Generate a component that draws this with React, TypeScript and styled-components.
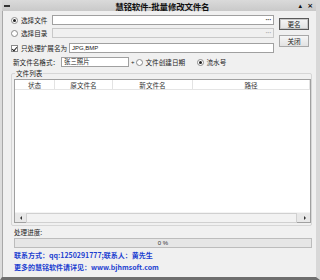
import React from 'react';
import styled, { createGlobalStyle } from 'styled-components';

const GlobalStyle = createGlobalStyle`
  html, body {
    margin: 0;
    padding: 0;
    background: #f0f0f0;
  }
  * {
    box-sizing: border-box;
  }
`;

const CJK = `"Noto Sans CJK SC", "Liberation Sans", sans-serif`;

// окно целиком
const Window = styled.div`
  width: 320px;
  height: 280px;
  background: #f0f0f0;
  border-left: 2px solid #dcdcdc;
  border-right: 4px solid #d8d8d8;
  border-bottom: 3px solid #6e6e6e;
  display: flex;
  flex-direction: column;
  font-family: ${CJK};
  font-size: 6.6px;
  color: #222;
  overflow: hidden;
`;

const TitleBar = styled.div`
  height: 11px;
  background: linear-gradient(#dadada, #c9c9c9);
  display: flex;
  align-items: center;
  padding: 0 3px 0 2px;
  flex-shrink: 0;
`;

const TitleIcon = styled.span`
  width: 6px;
  height: 2px;
  background: #333;
`;

const TitleText = styled.div`
  flex: 1;
  text-align: center;
  font-weight: bold;
  font-size: 8.5px;
  color: #111;
  padding-left: 16px;
  letter-spacing: -0.2px;
`;

const TitleControls = styled.div`
  display: flex;
  gap: 5px;
  font-family: "DejaVu Sans", sans-serif;
  font-size: 7px;
  font-weight: bold;
  color: #111;
`;

const Body = styled.div`
  flex: 1;
  display: flex;
  flex-direction: column;
  padding: 0 2px 0 8px;
  border-left: 1px solid #a8a8a8;
`;

const Top = styled.div`
  display: flex;
`;

const Fields = styled.div`
  width: 263px;
  display: flex;
  flex-direction: column;
`;

const Row = styled.div<{ $mt: number }>`
  display: flex;
  align-items: center;
  height: 10px;
  margin-top: ${p => p.$mt}px;
`;

const Radio = styled.span<{ $on?: boolean }>`
  width: 7px;
  height: 7px;
  border-radius: 50%;
  border: 1px solid #8a8a8a;
  background: #fff;
  display: inline-flex;
  align-items: center;
  justify-content: center;
  margin-right: 3px;
  flex-shrink: 0;
  &::after {
    content: '';
    width: 3px;
    height: 3px;
    border-radius: 50%;
    background: ${p => (p.$on ? '#222' : 'transparent')};
  }
`;

const Check = styled.span`
  width: 7px;
  height: 7px;
  border: 1px solid #8a8a8a;
  background: #fff;
  margin-right: 3px;
  flex-shrink: 0;
  position: relative;
  &::after {
    content: '';
    position: absolute;
    left: 1px;
    top: 0px;
    width: 2px;
    height: 4px;
    border-right: 1px solid #222;
    border-bottom: 1px solid #222;
    transform: rotate(40deg);
  }
`;

const Label = styled.span<{ $w?: number; $pl?: number }>`
  white-space: nowrap;
  width: ${p => (p.$w ? `${p.$w}px` : 'auto')};
  padding-left: ${p => p.$pl ?? 0}px;
  flex-shrink: 0;
  line-height: 10px;
  overflow: visible;
`;

const Input = styled.div<{ $w?: number; $disabled?: boolean }>`
  height: 10px;
  width: ${p => (p.$w ? `${p.$w}px` : 'auto')};
  flex: ${p => (p.$w ? 'none' : '1')};
  background: ${p => (p.$disabled ? '#f0f0f0' : '#fff')};
  border: 1px solid ${p => (p.$disabled ? '#c8c8c8' : '#a0a0a0')};
  display: flex;
  align-items: center;
  padding: 0 2px;
  font-size: 6.4px;
  line-height: 8px;
  white-space: nowrap;
`;

const Latin = styled.span`
  font-family: "Liberation Sans", sans-serif;
  font-size: 6px;
`;

const Dots = styled.span<{ $disabled?: boolean }>`
  margin-left: auto;
  font-family: "Liberation Sans", sans-serif;
  font-size: 7px;
  font-weight: bold;
  letter-spacing: -0.5px;
  line-height: 6px;
  color: ${p => (p.$disabled ? '#b0b0b0' : '#444')};
`;

const Plus = styled.span`
  font-family: "Liberation Sans", sans-serif;
  font-size: 6px;
  margin: 0 1px 0 2px;
`;

const Buttons = styled.div`
  display: flex;
  flex-direction: column;
  gap: 5px;
  margin-left: 5px;
  margin-top: 7px;
`;

const Button = styled.div<{ $default?: boolean }>`
  width: 30px;
  height: 12px;
  border: 1px solid ${p => (p.$default ? '#5a5a5a' : '#a8a8a8')};
  box-shadow: ${p => (p.$default ? 'inset 0 0 0 1px #c8c8c8' : 'none')};
  background: linear-gradient(#f6f6f6, #e2e2e2);
  display: flex;
  align-items: center;
  justify-content: center;
  font-size: 6.6px;
`;

const Group = styled.div`
  position: relative;
  margin-top: 6px;
  margin-right: 2px;
  border: 1px solid #d6d6d6;
  border-radius: 2px;
  height: 153px;
  padding: 5px 0 2px 2px;
  display: flex;
`;

const GroupLabel = styled.span`
  position: absolute;
  top: -5px;
  left: 3px;
  padding: 0 1px;
  background: #f0f0f0;
  line-height: 9px;
`;

const ListView = styled.div`
  flex: 1;
  border: 1px solid #a0a0a0;
  background: #fff;
  display: flex;
  flex-direction: column;
`;

const HeaderRow = styled.div`
  display: flex;
  height: 10px;
  border-bottom: 1px solid #e5e5e5;
`;

const HeaderCell = styled.div<{ $w?: number }>`
  width: ${p => (p.$w ? `${p.$w}px` : 'auto')};
  flex: ${p => (p.$w ? 'none' : '1')};
  border-right: 1px solid #e3e3e3;
  display: flex;
  align-items: center;
  justify-content: center;
  color: #333;
`;

const ListArea = styled.div`
  flex: 1;
`;

const ScrollBar = styled.div`
  height: 10px;
  display: flex;
  align-items: center;
  background: #e8e8e8;
  border-top: 1px solid #f4f4f4;
`;

const ScrollArrow = styled.span<{ $dir: 'left' | 'right' }>`
  width: 11px;
  height: 10px;
  display: flex;
  align-items: center;
  justify-content: center;
  &::after {
    content: '';
    border-top: 2px solid transparent;
    border-bottom: 2px solid transparent;
    ${p => (p.$dir === 'left' ? 'border-right: 2px solid #333;' : 'border-left: 2px solid #333;')}
  }
`;

const ScrollTrack = styled.div`
  flex: 1;
  height: 10px;
  display: flex;
`;

const ScrollThumb = styled.div`
  flex: 1;
  background: #f2f2f2;
  border: 1px solid #d0d0d0;
  margin-right: 2px;
`;

const ProgressLabel = styled.div`
  margin-top: 2px;
  line-height: 9px;
  padding-left: 3px;
`;

const Progress = styled.div`
  margin: 1px 2px 0 3px;
  height: 10px;
  border: 1px solid #bcbcbc;
  background: #e6e6e6;
  display: flex;
  align-items: center;
  justify-content: center;
  font-family: "Liberation Sans", sans-serif;
  font-size: 6px;
  color: #333;
`;

const Contact = styled.div<{ $mt: number }>`
  margin-top: ${p => p.$mt}px;
  padding-left: 3px;
  color: #1c3fd0;
  font-weight: bold;
  font-size: 7px;
  line-height: 9px;
  white-space: nowrap;
`;

const columns = [
  { name: '状态', w: 40 },
  { name: '原文件名', w: 58 },
  { name: '新文件名', w: 80 },
  { name: '路径' },
];

export default function App() {
  return (
    <>
      <GlobalStyle />
      <Window>
        <TitleBar>
          <TitleIcon />
          <TitleText>慧铭软件-批量修改文件名</TitleText>
          <TitleControls>
            <span>▴</span>
            <span>×</span>
          </TitleControls>
        </TitleBar>
        <Body>
          <Top>
            <Fields>
              <Row $mt={4}>
                <Radio $on />
                <Label $w={31}>选择文件</Label>
                <Input>
                  <Dots>···</Dots>
                </Input>
              </Row>
              <Row $mt={3}>
                <Radio />
                <Label $w={31}>选择目录</Label>
                <Input $disabled>
                  <Dots $disabled>···</Dots>
                </Input>
              </Row>
              <Row $mt={5}>
                <Check />
                <Label $w={48}>只处理扩展名为</Label>
                <Input>
                  <Latin>JPG,BMP</Latin>
                </Input>
              </Row>
              <Row $mt={4}>
                <Label $w={50} $pl={2}>新文件名格式：</Label>
                <Input $w={68}>张三照片</Input>
                <Plus>+</Plus>
                <Radio />
                <Label $w={51}>文件创建日期</Label>
                <Radio $on />
                <Label>流水号</Label>
              </Row>
            </Fields>
            <Buttons>
              <Button $default>更名</Button>
              <Button>关闭</Button>
            </Buttons>
          </Top>
          <Group>
            <GroupLabel>文件列表</GroupLabel>
            <ListView>
              <HeaderRow>
                {columns.map(c => (
                  <HeaderCell key={c.name} $w={c.w}>
                    {c.name}
                  </HeaderCell>
                ))}
              </HeaderRow>
              <ListArea />
              <ScrollBar>
                <ScrollArrow $dir="left" />
                <ScrollTrack>
                  <ScrollThumb />
                </ScrollTrack>
                <ScrollArrow $dir="right" />
              </ScrollBar>
            </ListView>
          </Group>
          <ProgressLabel>处理进度:</ProgressLabel>
          <Progress>0 %</Progress>
          <Contact $mt={3}>联系方式：qq:1250291777;联系人：黄先生</Contact>
          <Contact $mt={3}>更多的慧铭软件请详见：www.bjhmsoft.com</Contact>
        </Body>
      </Window>
    </>
  );
}
